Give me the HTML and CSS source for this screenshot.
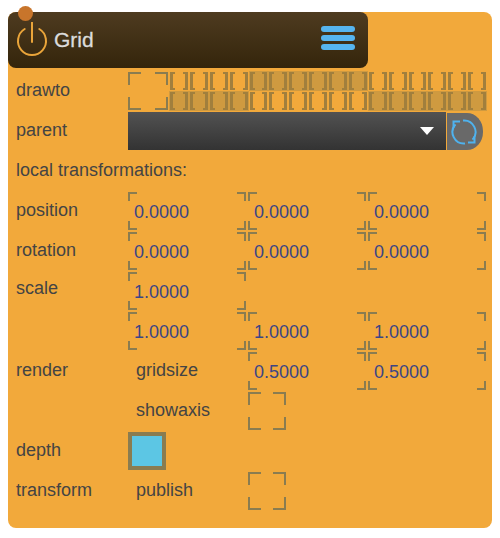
FILE: index.html
```html
<!DOCTYPE html>
<html lang="en">
<head>
<meta charset="utf-8">
<title>Grid</title>
<link rel="stylesheet" href="styles.css">
</head>
<body>
<div class="panel">
  <header class="head">
    <span class="dot"></span>
    <svg class="power" viewBox="0 0 32 36"><path d="M16 0.5V20" /><path d="M8.7 7A14 14 0 1 0 23.3 7" /></svg>
    <span class="title">Grid</span>
    <span class="menu"><i></i><i></i><i></i></span>
  </header>
  <div class="row">
    <span class="label">drawto</span>
    <span class="big"></span>
    <div class="layers">
      <i></i><i></i><i></i><i></i><i class="on"></i><i class="on"></i><i class="on"></i><i class="on"></i><i class="on"></i><i class="on"></i><i></i><i></i><i></i><i></i><i></i><i></i>
      <i class="on"></i><i class="on"></i><i class="on"></i><i class="on"></i><i></i><i></i><i></i><i></i><i></i><i></i><i class="on"></i><i class="on"></i><i class="on"></i><i class="on"></i><i class="on"></i><i class="on"></i>
    </div>
  </div>
  <div class="row">
    <span class="label">parent</span>
    <div class="select"><span class="arrow"></span></div>
    <div class="refresh">
      <svg viewBox="-14 -14 28 28"><path d="M-1 -11.5A11.5 11.5 0 0 1 8.5 7.7" /><path d="M4 10.5H10.5V4" /><path d="M1 11.5A11.5 11.5 0 0 1 -8.5 -7.7" /><path d="M-4 -10.5H-10.5V-4" /></svg>
    </div>
  </div>
  <div class="row"><span class="label wide">local transformations:</span></div>
  <div class="row">
    <span class="label">position</span>
    <span class="cell">0.0000</span><span class="cell">0.0000</span><span class="cell">0.0000</span>
  </div>
  <div class="row">
    <span class="label">rotation</span>
    <span class="cell">0.0000</span><span class="cell">0.0000</span><span class="cell">0.0000</span>
  </div>
  <div class="row">
    <span class="label raised">scale</span>
    <span class="cell">1.0000</span>
  </div>
  <div class="row">
    <span class="label"></span>
    <span class="cell">1.0000</span><span class="cell">1.0000</span><span class="cell">1.0000</span>
  </div>
  <div class="row">
    <span class="label">render</span>
    <span class="sub">gridsize</span>
    <span class="cell">0.5000</span><span class="cell">0.5000</span>
  </div>
  <div class="row">
    <span class="label"></span>
    <span class="sub">showaxis</span>
    <span class="check"></span>
  </div>
  <div class="row">
    <span class="label">depth</span>
    <span class="swatch"></span>
  </div>
  <div class="row">
    <span class="label">transform</span>
    <span class="sub">publish</span>
    <span class="check"></span>
  </div>
</div>
</body>
</html>
```
FILE: styles.css
```css
* { box-sizing: border-box; }
html, body { margin: 0; background: #fff; }
body { padding: 12px 8px 10px; font-family: "Liberation Sans", Arial, sans-serif; }

.panel {
  width: 484px;
  height: 516px;
  background: #f2a93b;
  border-radius: 8px;
  --c: #8a7c50;
  --b: #a17f3d;
}

.head {
  position: relative;
  width: 360px;
  height: 56px;
  margin-bottom: 4px;
  display: flex;
  align-items: center;
  border-radius: 8px;
  background: linear-gradient(#4e3b20, #34250b);
}
.dot {
  position: absolute;
  left: 10px;
  top: -6px;
  width: 15px;
  height: 15px;
  border-radius: 50%;
  background: #c8752b;
}
.power {
  flex: none;
  width: 32px;
  height: 36px;
  margin-left: 8px;
  fill: none;
  stroke: #eaa53a;
  stroke-width: 2;
  stroke-linecap: round;
}
.title {
  margin-left: 6px;
  font-size: 21px;
  color: #dcdcdc;
  -webkit-text-stroke: 0.3px #dcdcdc;
}
.menu {
  margin-left: auto;
  margin-right: 13px;
  margin-bottom: 4px;
  display: flex;
  flex-direction: column;
  gap: 3px;
}
.menu i {
  display: block;
  width: 34px;
  height: 6px;
  border-radius: 3px;
  background: #56b4ee;
}

.row {
  display: flex;
  height: 40px;
}
.label, .sub {
  flex: none;
  width: 120px;
  padding-left: 8px;
  font-size: 18px;
  line-height: 37px;
  color: #444;
}
.label.wide { width: auto; }
.label.raised { line-height: 33px; }

.cell, .check, .big, .layers i {
  background-repeat: no-repeat;
  background-position:
    left top, left top, right top, right top,
    left bottom, left bottom, right bottom, right bottom;
}
.cell, .check, .big {
  background-image:
    linear-gradient(var(--c), var(--c)), linear-gradient(var(--c), var(--c)),
    linear-gradient(var(--c), var(--c)), linear-gradient(var(--c), var(--c)),
    linear-gradient(var(--c), var(--c)), linear-gradient(var(--c), var(--c)),
    linear-gradient(var(--c), var(--c)), linear-gradient(var(--c), var(--c));
}
.cell {
  flex: none;
  width: 118px;
  height: 38px;
  margin-right: 2px;
  padding-left: 6px;
  font-size: 18px;
  line-height: 40px;
  color: #3d4585;
  background-size: 9px 2px, 2px 9px, 9px 2px, 2px 9px, 9px 2px, 2px 9px, 9px 2px, 2px 9px;
}
.check, .big {
  flex: none;
  height: 38px;
  background-size: 13px 2px, 2px 13px, 13px 2px, 2px 13px, 13px 2px, 2px 13px, 13px 2px, 2px 13px;
}
.check { width: 38px; }
.big { width: 40px; }

.layers {
  flex: none;
  width: 316px;
  display: grid;
  grid-template-columns: repeat(16, 1fr);
  grid-auto-rows: 18px;
  gap: 2px;
  margin-left: 2px;
}
.layers i {
  display: block;
  background-image:
    linear-gradient(var(--b), var(--b)), linear-gradient(var(--b), var(--b)),
    linear-gradient(var(--b), var(--b)), linear-gradient(var(--b), var(--b)),
    linear-gradient(var(--b), var(--b)), linear-gradient(var(--b), var(--b)),
    linear-gradient(var(--b), var(--b)), linear-gradient(var(--b), var(--b));
  background-size: 5px 2px, 3px 18px, 5px 2px, 3px 18px, 5px 2px, 3px 18px, 5px 2px, 3px 18px;
}
.layers i.on {
  background-color: #cf9a40;
  box-shadow: 0 0 0 1px #cf9a40;
}

.select {
  position: relative;
  flex: none;
  width: 318px;
  height: 38px;
  background: linear-gradient(#525252, #333);
}
.arrow {
  position: absolute;
  right: 12px;
  top: 15px;
  width: 0;
  height: 0;
  border-left: 7px solid transparent;
  border-right: 7px solid transparent;
  border-top: 8px solid #fff;
}
.refresh {
  flex: none;
  width: 36px;
  height: 37px;
  margin: 1px 0 0 1px;
  padding-right: 2px;
  display: flex;
  align-items: center;
  justify-content: center;
  border-radius: 0 16px 16px 0 / 0 18px 18px 0;
  background: #696969;
}
.refresh svg {
  width: 28px;
  height: 28px;
  fill: none;
  stroke: #4fb2ee;
  stroke-width: 2;
}

.swatch {
  flex: none;
  width: 38px;
  height: 38px;
  border: 4px solid var(--c);
  background: #5cc6e4;
}
```
